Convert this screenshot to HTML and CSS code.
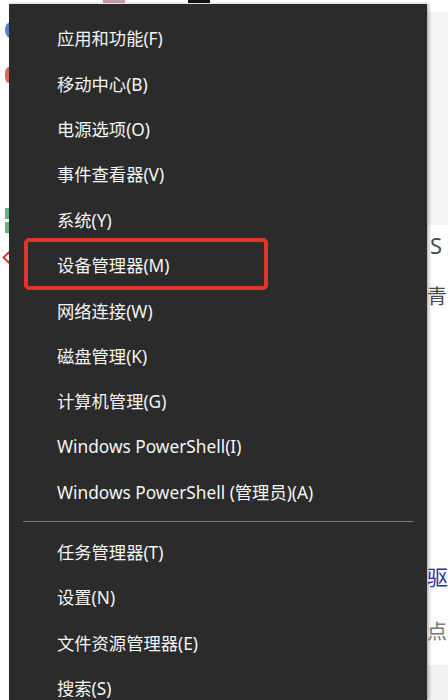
FILE: index.html
```html
<!DOCTYPE html>
<html lang="zh-CN">
<head>
<meta charset="utf-8">
<link rel="stylesheet" href="styles.css">
</head>
<body>
<span class="mark mark-pink"></span>
<span class="mark mark-black"></span>
<div class="left">
  <span class="frag frag-blue"></span>
  <span class="frag frag-red"></span>
  <span class="frag frag-green1"></span>
  <span class="frag frag-green2"></span>
  <span class="frag frag-diamond"></span>
</div>
<div class="menu">
  <div class="item">应用和功能(F)</div>
  <div class="item">移动中心(B)</div>
  <div class="item">电源选项(O)</div>
  <div class="item">事件查看器(V)</div>
  <div class="item">系统(Y)</div>
  <div class="item item-marked">设备管理器(M)<span class="highlight"></span></div>
  <div class="item">网络连接(W)</div>
  <div class="item">磁盘管理(K)</div>
  <div class="item">计算机管理(G)</div>
  <div class="item">Windows PowerShell(I)</div>
  <div class="item">Windows PowerShell (管理员)(A)</div>
  <div class="sep"></div>
  <div class="item">任务管理器(T)</div>
  <div class="item">设置(N)</div>
  <div class="item">文件资源管理器(E)</div>
  <div class="item">搜索(S)</div>
</div>
<div class="right">
  <div class="hdr"></div>
  <div class="t t1">S</div>
  <div class="t t2">青</div>
  <div class="t t3">驱</div>
  <div class="t t4">点</div>
  <div class="foot"></div>
</div>
</body>
</html>
```
FILE: styles.css
```css
html, body {
  margin: 0;
  padding: 0;
}
body {
  width: 448px;
  height: 700px;
  overflow: hidden;
  background: #ffffff;
  display: flex;
  position: relative;
  font-family: "Noto Sans", "Noto Sans CJK SC", sans-serif;
}
.mark {
  position: absolute;
  top: 0;
  height: 3px;
}
.mark-pink { left: 103px; width: 22px; background: #c99aa4; }
.mark-black { left: 188px; width: 22px; background: #111; }

.left {
  width: 9px;
  flex: none;
  position: relative;
  overflow: hidden;
}
.frag { position: absolute; }
.frag-blue { left: 5px; top: 22px; width: 12px; height: 16px; border-radius: 50%; background: #4f82d6; }
.frag-red { left: 5px; top: 67px; width: 10px; height: 16px; border-radius: 40%; background: #d86b5c; }
.frag-green1 { left: 5px; top: 208px; width: 6px; height: 11px; background: #62b57f; }
.frag-green2 { left: 5px; top: 222px; width: 6px; height: 11px; background: #62b57f; }
.frag-diamond { left: 4px; top: 253px; width: 9px; height: 9px; transform: rotate(45deg); border: 2px solid #d8372b; box-sizing: border-box; }

.menu {
  width: 418px;
  flex: none;
  margin-top: 4px;
  padding-top: 11px;
  background: #2b2b2b;
  box-shadow: 2px 0 3px rgba(0, 0, 0, 0.28);
  position: relative;
  z-index: 2;
}
.item {
  height: 45.4px;
  display: flex;
  align-items: center;
  padding-left: 48px;
  color: #f4f4f4;
  font-size: 17.3px;
  position: relative;
}
.highlight {
  position: absolute;
  left: 15px;
  top: -4px;
  width: 244px;
  height: 52px;
  box-sizing: border-box;
  border: 4px solid #e1352c;
  border-radius: 5px;
}
.sep {
  height: 1px;
  margin: 6.6px 14px 7px 14px;
  background: #7a7a7a;
}

.right {
  flex: 1;
  overflow: hidden;
  position: relative;
}
.hdr {
  margin-top: 12px;
  height: 213px;
  background: #f3f4f6;
}
.t {
  white-space: nowrap;
  color: #4a4a4a;
}
.t1 {
  padding-left: 3px;
  height: 40px;
  line-height: 40px;
  font-size: 22px;
}
.t2 {
  margin-top: 15px;
  height: 34px;
  line-height: 34px;
  font-size: 20px;
}
.t3 {
  margin-top: 246px;
  height: 34px;
  line-height: 34px;
  font-size: 21px;
  color: #2a2fa8;
}
.t4 {
  margin-top: 21px;
  height: 34px;
  line-height: 34px;
  font-size: 20px;
  color: #777;
}
.foot {
  margin-top: 16px;
  height: 40px;
  background: #f1f1f1;
}
```
